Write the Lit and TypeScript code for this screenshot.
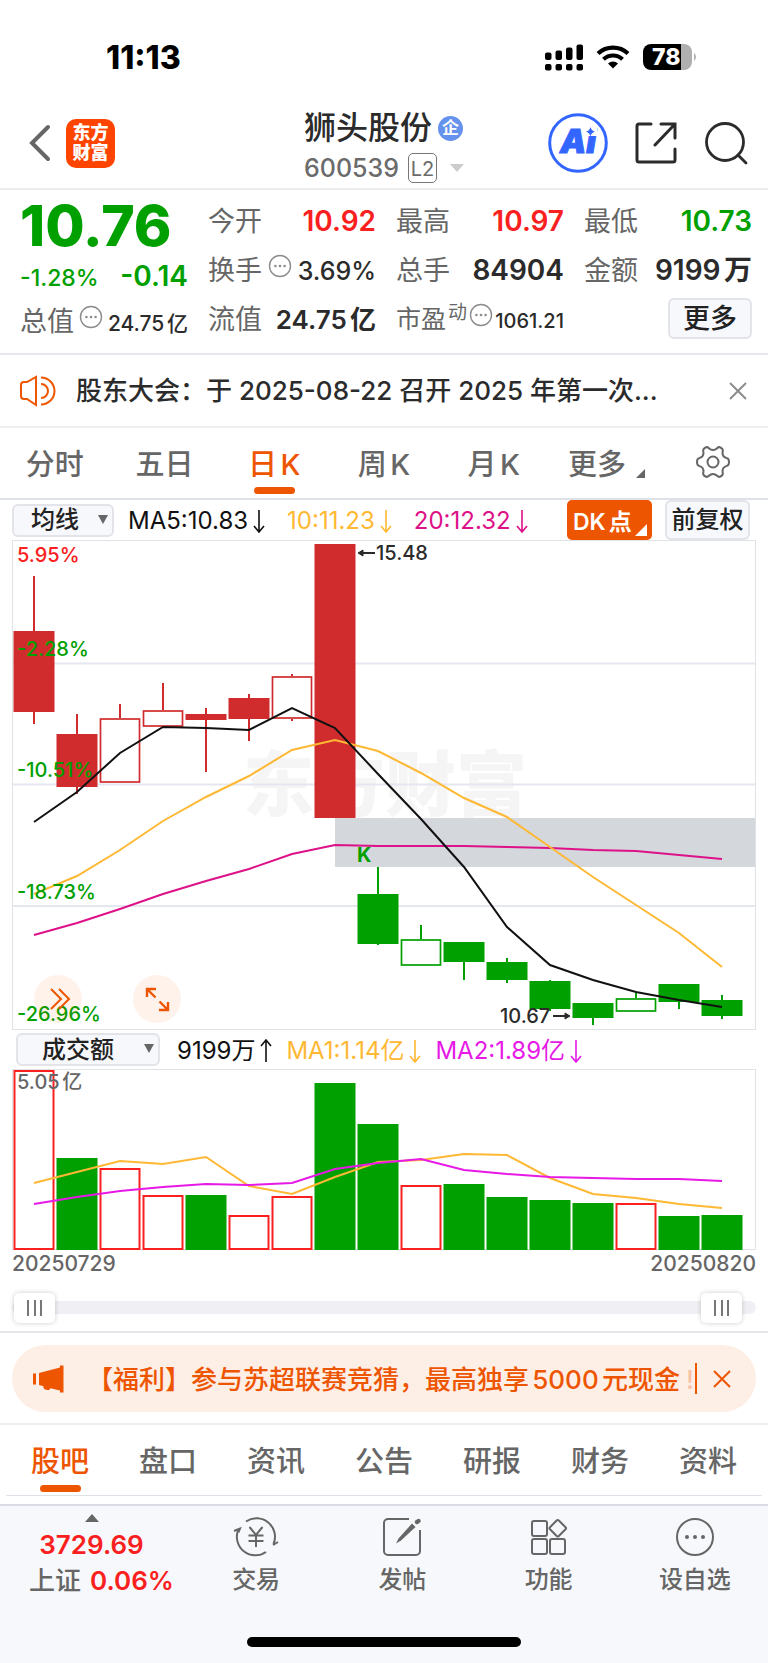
import { LitElement, html, svg, css } from "lit";
import { customElement } from "lit/decorators.js";
import { classMap } from "lit/directives/class-map.js";

type Candle = { open: number; close: number; high: number; low: number; up: boolean; hollow: boolean };

const STEP = 43;
const FIRST = 34;
const cx = (i: number) => FIRST + i * STEP;

const candle = (open: number, close: number, high: number, low: number, up: boolean, hollow = false): Candle => ({
  open, close, high, low, up, hollow,
});

const CANDLES: Candle[] = [
  candle(631, 712, 576, 724, true),
  candle(734, 787, 714, 794, true),
  candle(718, 783, 704, 783, true, true),
  candle(710, 727, 683, 727, true, true),
  candle(714, 720, 708, 772, true),
  candle(698, 719, 694, 741, true),
  candle(676, 719, 674, 721, true, true),
  candle(544, 818, 544, 818, true),
  candle(894, 944, 867, 945, false),
  candle(939, 966, 925, 966, false, true),
  candle(942, 962, 942, 980, false),
  candle(962, 980, 958, 983, false),
  candle(981, 1009, 980, 1011, false),
  candle(1003, 1018, 1003, 1025, false),
  candle(998, 1012, 993, 1012, false, true),
  candle(984, 1002, 984, 1009, false),
  candle(1000, 1016, 995, 1019, false),
];

const MA5 = [822, 792, 753, 727, 728, 730, 708, 728, 774, 819, 867, 927, 965, 980, 992, 1000, 1007];
const MA10 = [894, 876, 850, 821, 797, 776, 750, 740, 751, 773, 798, 817, 847, 877, 905, 933, 967];
const MA20 = [935, 923, 909, 894, 881, 869, 854, 845, 846, 846, 846, 847, 848, 850, 851, 855, 859];

const VOLUMES: [number, boolean][] = [
  [1070, true], [1158, false], [1168, true], [1195, true], [1195, false], [1215, true], [1196, true],
  [1083, false], [1124, false], [1185, true], [1184, false], [1197, false], [1200, false], [1203, false],
  [1203, true], [1216, false], [1215, false],
];
const VMA1 = [1183, 1172, 1161, 1164, 1157, 1186, 1194, 1177, 1162, 1160, 1154, 1155, 1178, 1194, 1198, 1204, 1208];
const VMA2 = [1204, 1197, 1191, 1187, 1184, 1185, 1183, 1169, 1163, 1159, 1170, 1174, 1177, 1178, 1179, 1179, 1181];

const points = (ys: number[]) => ys.map((y, i) => `${cx(i)},${y}`).join(" ");

const moreDots = html`<svg class="dots" viewBox="0 0 24 24" aria-hidden="true">
  <circle cx="12" cy="12" r="10.5" fill="none" stroke="#8c8c8c" stroke-width="1.4" />
  <circle cx="7.4" cy="12" r="1.3" /><circle cx="12" cy="12" r="1.3" /><circle cx="16.6" cy="12" r="1.3" />
</svg>`;

const arrow = (up = false) => html`<svg class="arrow" viewBox="0 0 12 24" aria-hidden="true">
  <path d=${up ? "M6 23V2M1 7l5-6 5 6" : "M6 1v21M1 17l5 6 5-6"} fill="none" stroke="currentColor" stroke-width="1.6" />
</svg>`;

@customElement("app-root")
export class AppRoot extends LitElement {
  static styles = css`
    :host {
      display: block;
      background: #fff;
      color: #2b2b2b;
      font-family: Inter, "Noto Sans CJK SC", sans-serif;
      font-size: 24px;
      text-autospace: normal;
    }
    * { box-sizing: border-box; }
    button, select {
      font: inherit;
      color: inherit;
      border: 0;
      background: none;
      padding: 0;
      margin: 0;
    }
    svg { display: block; flex: none; }

    .status {
      display: flex;
      align-items: center;
      justify-content: space-between;
      height: 98px;
      padding: 16px 71px 0 106px;
      color: #000;
    }
    .clock { font-size: 32px; font-weight: 800; }
    .signals { display: flex; align-items: center; gap: 13px; }

    .head {
      display: grid;
      grid-template-columns: 1fr auto 1fr;
      align-items: center;
      height: 92px;
      padding: 0 20px;
      border-bottom: 2px solid #ececec;
    }
    .left, .right { display: flex; align-items: center; }
    .left { gap: 14px; padding-left: 8px; }
    .right { justify-content: flex-end; gap: 27px; }
    .logo {
      display: grid;
      place-content: center;
      width: 49px;
      height: 49px;
      border-radius: 10px;
      background: #ff4400;
      color: #fff;
      font-size: 18px;
      line-height: 20px;
      font-weight: 900;
      text-decoration: none;
    }
    .stock { padding-top: 10px; }
    .title { display: flex; align-items: center; gap: 6px; height: 40px; font-size: 32px; line-height: 40px; margin: 0; font-weight: 500; }
    .corp {
      width: 25px;
      height: 25px;
      border-radius: 50%;
      background: #6592ec;
      color: #fff;
      font-size: 17px;
      line-height: 24px;
      font-weight: 700;
      text-align: center;
    }
    .code { display: flex; align-items: center; gap: 9px; color: #6b6b6b; font-size: 25px; line-height: 32px; height: 40px; font-weight: 500; }
    .level { border: 1px solid #777; border-radius: 5px; width: 29px; height: 30px; font-size: 20px; line-height: 30px; text-align: center; font-weight: 400; }
    .code svg { margin-left: 4px; }

    .quote {
      display: grid;
      grid-template-columns: repeat(4, 1fr);
      column-gap: 20px;
      height: 165px;
      padding: 7px 16px 0 20px;
      border-bottom: 2px solid #e6e8ee;
    }
    .col { display: flex; flex-direction: column; }
    .pair { display: flex; justify-content: space-between; align-items: baseline; height: 49px; line-height: 49px; white-space: nowrap; }
    .label { color: #666; font-size: 27px; }
    .label.mid { font-size: 25px; }
    .num { font-size: 28px; font-weight: 600; }
    .num.amount { font-size: 26px; }
    .num.mid { font-size: 25px; font-weight: 500; }
    .num.small { font-size: 21px; font-weight: 500; }
    .num.tiny { font-size: 20px; font-weight: 500; }
    .red { color: #fa2020; }
    .green { color: #00a000; }
    .price { font-size: 57px; font-weight: 800; line-height: 58px; height: 58px; }
    .change { height: 46px; line-height: 42px; }
    .change .pct { font-size: 23px; font-weight: 500; }
    .cap { height: 42px; line-height: 42px; }
    .sup { align-self: flex-start; color: #666; font-size: 19px; line-height: 36px; }
    .dots { width: 24px; height: 24px; align-self: flex-start; fill: #8c8c8c; margin-top: 8px; }
    .cap .dots { margin-top: 4px; }
    .soft {
      border: 2px solid #e2e4ea;
      border-radius: 6px;
      background: #f7f8fb;
      color: #222;
      font-weight: 500;
    }
    .more { align-self: flex-end; width: 84px; height: 41px; margin-top: 3px; font-size: 27px; line-height: 36px; }

    .notice {
      display: flex;
      align-items: center;
      height: 73px;
      padding: 0 20px;
      gap: 20px;
      border-bottom: 2px solid #eee;
    }
    .notice p { flex: 1; margin: 0; font-size: 26px; font-weight: 500; white-space: nowrap; overflow: hidden; text-overflow: ellipsis; padding-bottom: 4px; }

    .tabs { display: grid; grid-template-columns: repeat(7, 1fr); height: 72px; border-bottom: 2px solid #dfe1e8; }
    .tab {
      position: relative;
      display: flex;
      align-items: center;
      justify-content: center;
      padding-bottom: 3px;
      color: #666;
      font-size: 29px;
      font-weight: 500;
      white-space: nowrap;
    }
    .tab.on { color: #ee5500; }
    .tab.on::after {
      content: "";
      position: absolute;
      bottom: 4px;
      width: 41px;
      height: 7px;
      border-radius: 4px;
      background: #ee5500;
    }
    .tab.drop { padding-left: 6px; }
    .corner { align-self: flex-end; margin: 0 0 17px 10px; }

    .legend { display: flex; align-items: center; height: 40px; padding: 0 18px 0 12px; white-space: nowrap; }
    .legend.lower { height: 39px; padding-left: 16px; text-autospace: no-autospace; }
    .pick { position: relative; }
    .pick select { appearance: none; width: 102px; height: 33px; padding-left: 17px; font-size: 24px; line-height: 28px; }
    .lower .pick select { width: 144px; padding-left: 24px; }
    .pick svg { position: absolute; right: 6px; top: 11px; pointer-events: none; }
    .ma { display: flex; align-items: center; gap: 5px; margin-left: 22px; font-size: 24px; line-height: 30px; padding-top: 2px; }
    .ma.first { margin-left: 14px; }
    .lower .ma { margin-left: 14px; }
    .lower .ma.first { margin-left: 17px; }
    .arrow { width: 12px; height: 24px; }
    .black { color: #111; }
    .amber { color: #ffb833; }
    .pink { color: #dd1188; }
    .violet { color: #e619e6; }
    .dk, .fq { width: 85px; height: 40px; }
    .dk { position: relative; margin-left: auto; border-radius: 5px; background: #ee5500; color: #fff; font-weight: 600; font-size: 23px; text-align: left; padding-left: 6px; }
    .dk svg { position: absolute; right: 5px; bottom: 4px; }
    .fq { margin-left: 13px; font-size: 24px; line-height: 34px; }

    .chart { margin: 0 12px; position: relative; }
    .chart svg { width: 100%; height: auto; }
    .chart text { font-family: Inter, "Noto Sans CJK SC", sans-serif; font-size: 20px; font-weight: 500; }
    .chart .mark { font-size: 71px; font-weight: 900; fill: #f5f5f6; }
    .chart .point { font-weight: 700; }
    .chart .note { fill: #2b2b2b; }
    .chart .gray { fill: #666; }
    .tools { position: absolute; left: 22px; bottom: 7px; display: flex; gap: 51px; }
    .tool { display: grid; place-content: center; width: 48px; height: 48px; border-radius: 50%; background: rgba(238, 85, 0, 0.08); }
    .chart .tool svg { width: 28px; height: 28px; }

    .dates { display: flex; justify-content: space-between; padding: 0 12px; color: #666; font-size: 21px; font-weight: 500; line-height: 28px; }
    .zoom { display: grid; align-items: center; height: 47px; margin: 6px 12px 0; }
    .zoom > * { grid-area: 1 / 1; }
    .track { height: 13px; border-radius: 7px; background: #f0f0f4; }
    .zoom input { appearance: none; width: 100%; height: 30px; margin: 0; background: transparent; pointer-events: none; }
    .zoom input::-webkit-slider-thumb {
      appearance: none;
      pointer-events: auto;
      width: 41px;
      height: 30px;
      border-radius: 5px;
      background:
        linear-gradient(#777, #777) 13px 7px / 2px 16px no-repeat,
        linear-gradient(#777, #777) 20px 7px / 2px 16px no-repeat,
        linear-gradient(#777, #777) 26px 7px / 2px 16px no-repeat,
        #fff;
      box-shadow: 0 0 5px rgba(0, 0, 0, 0.2);
    }

    .promo { border-top: 2px solid #e4e6ea; border-bottom: 2px solid #eee; padding: 12px 12px 11px; }
    .pill { display: flex; align-items: center; height: 67px; padding: 0 25px 0 20px; border-radius: 34px; background: #fdeee6; color: #ee5500; }
    .pill p { flex: 1; margin: 0 0 0 22px; font-size: 26px; font-weight: 500; white-space: nowrap; padding-bottom: 2px; }
    .fade { color: rgba(238, 85, 0, 0.3); padding-left: 6px; }
    .bar { width: 2px; height: 31px; background: #ee5500; margin-right: 16px; }

    .sections { height: 71px; margin: 0 6px 8px; border-bottom-width: 1px; }
    .sections .tab.on::after { bottom: 3px; }

    .foot { background: #f7f8fb; border-top: 2px solid #dadce3; padding-bottom: 17px; }
    .dock { display: grid; grid-template-columns: 183px repeat(4, 1fr); height: 131px; }
    .dock button { display: flex; flex-direction: column; align-items: center; color: #666; font-size: 24px; line-height: 32px; font-weight: 500; }
    .dock .icon { margin-top: 11px; margin-bottom: 7px; }
    .dock .index { line-height: 36px; font-size: 26px; }
    .index svg { margin: 8px 0 5px; }
    .index .num { font-size: 26px; }
    .index .row { display: flex; gap: 9px; padding-left: 20px; }
    .home { width: 274px; height: 10px; border-radius: 5px; background: #000; margin: 0 auto; }
  `;

  private tab(name: string, on = false) {
    return html`<button class=${classMap({ tab: true, on })} role="tab" aria-selected=${on}>${name}</button>`;
  }

  private candles() {
    return CANDLES.map((c, i) => {
      const x = cx(i);
      const color = c.up ? "#d02c2e" : "#00a000";
      const inset = c.hollow ? 1 : 0;
      return svg`
        <path d="M${x} ${c.high}V${c.open}M${x} ${c.close}V${c.low}" stroke=${color} stroke-width="2" />
        <rect x=${x - 20.5 + inset} y=${c.open + inset} width=${41 - inset * 2} height=${c.close - c.open - inset * 2}
          fill=${c.hollow ? "#fff" : color} stroke=${c.hollow ? color : "none"} stroke-width="1.7" />`;
    });
  }

  private priceChart() {
    return html`<svg viewBox="12 540 744 490" role="img" aria-label="日K">
      <text class="mark" x="243" y="810">东方财富</text>
      <path d="M12 663.5H756M12 784.5H756M12 906H756" stroke="#e4e7ee" stroke-width="2" />
      <rect x="12.5" y="540.5" width="743" height="489" fill="none" stroke="#dfe2e7" />
      <rect x="335" y="818" width="420" height="49" fill="#d4d7dc" />
      ${this.candles()}
      <g fill="none" stroke-width="2">
        <polyline points=${points(MA20)} stroke="#dd1188" />
        <polyline points=${points(MA10)} stroke="#ffb833" />
        <polyline points=${points(MA5)} stroke="#111" />
      </g>
      <text x="17" y="562" fill="#fa2020">5.95%</text>
      <g fill="#00a000">
        <text x="17" y="656">-2.28%</text>
        <text x="17" y="777">-10.51%</text>
        <text x="17" y="899">-18.73%</text>
        <text x="17" y="1021">-26.96%</text>
        <text class="point" x="357" y="862">K</text>
      </g>
      <g stroke="#2b2b2b" stroke-width="2" fill="#2b2b2b">
        <path d="M375 553H360M553 1016H567" />
        <path d="M363 550l-5 3 5 3zM565 1013l5 3-5 3z" stroke-width="1" />
      </g>
      <text class="note" x="376" y="560">15.48</text>
      <text class="note" x="500" y="1023">10.67</text>
    </svg>`;
  }

  private volumeChart() {
    return html`<svg viewBox="12 1069 744 181" role="img" aria-label="成交额">
      <rect x="12.5" y="1069.5" width="743" height="180" fill="none" stroke="#dfe2e7" />
      ${VOLUMES.map(([top, hollow], i) => hollow
        ? svg`<rect x=${cx(i) - 19.5} y=${top + 1} width="39" height=${1248 - top} fill="#fff" stroke="#fa2020" stroke-width="2" />`
        : svg`<rect x=${cx(i) - 20.5} y=${top} width="41" height=${1250 - top} fill="#00a000" />`)}
      <g fill="none" stroke-width="2">
        <polyline points=${points(VMA1)} stroke="#ffb833" />
        <polyline points=${points(VMA2)} stroke="#e619e6" />
      </g>
      <text class="gray" x="17" y="1089">5.05亿</text>
    </svg>`;
  }

  render() {
    return html`
      <div class="status">
        <span class="clock">11:13</span>
        <div class="signals">
          <svg width="38" height="27" viewBox="0 0 38 27">
            <rect x="0" y="8.5" width="6.5" height="7.5" rx="2" /><rect x="10.5" y="6.5" width="6.5" height="9.5" rx="2" />
            <rect x="21" y="3.5" width="6.5" height="12.5" rx="2" /><rect x="31.5" y="0.5" width="6.5" height="15.5" rx="2" />
            <rect x="0" y="20" width="6.5" height="6.5" rx="2" /><rect x="10.5" y="20" width="6.5" height="6.5" rx="2" />
            <rect x="21" y="20" width="6.5" height="6.5" rx="2" /><rect x="31.5" y="20" width="6.5" height="6.5" rx="2" />
          </svg>
          <svg width="34" height="26" viewBox="0 0 34 26">
            <path d="M2 9.5a22 22 0 0 1 30 0M7.5 15.2a14 14 0 0 1 19 0" fill="none" stroke="#000" stroke-width="4.2" />
            <path d="M17 24.5l-5-5a7.4 7.4 0 0 1 10 0z" />
          </svg>
          <svg width="54" height="26" viewBox="0 0 54 26">
            <path d="M38 0H41a8 8 0 0 1 8 8v10a8 8 0 0 1-8 8h-3z" fill="#b0b0b0" />
            <path d="M8 0H38V26H8a8 8 0 0 1-8-8V8a8 8 0 0 1 8-8z" />
            <path d="M51 9a5 5 0 0 1 0 8z" fill="#b0b0b0" />
            <text x="9" y="21" font-size="23" font-weight="800" fill="#fff">78</text>
          </svg>
        </div>
      </div>

      <header class="head">
        <div class="left">
          <button aria-label="返回">
            <svg width="24" height="38" viewBox="0 0 24 38"><path d="M20 3L4 19l16 16" fill="none" stroke="#666" stroke-width="4" stroke-linecap="round" /></svg>
          </button>
          <a class="logo" href="#"><span>东方</span><span>财富</span></a>
        </div>
        <div class="stock">
          <h1 class="title">狮头股份<span class="corp">企</span></h1>
          <div class="code">600539<span class="level">L2</span>
            <svg width="14" height="8" viewBox="0 0 14 8"><path d="M0 0h14L7 8z" fill="#ccc" /></svg>
          </div>
        </div>
        <div class="right">
          <button aria-label="Ai">
            <svg width="60" height="60" viewBox="0 0 60 60">
              <circle cx="30" cy="30" r="28.3" fill="#fff" stroke="#3366ff" stroke-width="3" />
              <text x="12" y="40" font-size="33" font-weight="900" font-style="italic" fill="#3366ff" stroke="#3366ff" stroke-width="1">Ai</text>
              <path d="M35 11h14v12H35z" fill="#fff" />
              <path d="M42.5 14c1 3 1.7 3.7 4.5 4.7-2.8 1-3.5 1.7-4.5 4.7-1-3-1.7-3.7-4.5-4.7 2.8-1 3.5-1.7 4.5-4.7z" fill="#3366ff" />
            </svg>
          </button>
          <button aria-label="分享">
            <svg width="42" height="42" viewBox="0 0 42 42" fill="none" stroke="#2b2b2b" stroke-width="3" stroke-linecap="round">
              <path d="M16 2H4a2 2 0 0 0-2 2V38a2 2 0 0 0 2 2H38a2 2 0 0 0 2-2V27M26 2H40V16M40 2L20 23" />
            </svg>
          </button>
          <button aria-label="搜索">
            <svg width="44" height="44" viewBox="0 0 44 44" fill="none" stroke="#2b2b2b" stroke-width="2.8" stroke-linecap="round">
              <circle cx="21" cy="21" r="18.5" /><path d="M34 34l8 8" />
            </svg>
          </button>
        </div>
      </header>

      <section class="quote">
        <div class="col">
          <div class="price green">10.76</div>
          <div class="pair change green"><span class="pct">-1.28%</span><span class="num">-0.14</span></div>
          <div class="pair cap"><span class="label">总值</span>${moreDots}<span class="num small">24.75亿</span></div>
        </div>
        <div class="col">
          <div class="pair"><span class="label">今开</span><span class="num red">10.92</span></div>
          <div class="pair"><span class="label">换手</span>${moreDots}<span class="num mid">3.69%</span></div>
          <div class="pair"><span class="label">流值</span><span class="num amount">24.75亿</span></div>
        </div>
        <div class="col">
          <div class="pair"><span class="label">最高</span><span class="num red">10.97</span></div>
          <div class="pair"><span class="label">总手</span><span class="num">84904</span></div>
          <div class="pair"><span class="label mid">市盈</span><span class="sup">动</span>${moreDots}<span class="num tiny">1061.21</span></div>
        </div>
        <div class="col">
          <div class="pair"><span class="label">最低</span><span class="num green">10.73</span></div>
          <div class="pair"><span class="label">金额</span><span class="num">9199万</span></div>
          <button class="soft more">更多</button>
        </div>
      </section>

      <section class="notice">
        <svg width="36" height="32" viewBox="0 0 36 32" fill="none" stroke="#ee5500" stroke-width="2">
          <path d="M16 2v28L7 24H4a3 3 0 0 1-3-3V10a3 3 0 0 1 3-3h3z" />
          <path d="M21 2.5a13.5 13.5 0 0 1 0 27M21 9a7 7 0 0 1 0 14" />
        </svg>
        <p>股东大会：于 2025-08-22 召开 2025 年第一次...</p>
        <button aria-label="关闭">
          <svg width="20" height="20" viewBox="0 0 20 20"><path d="M2 2l16 16M18 2L2 18" stroke="#8c8c8c" stroke-width="2" /></svg>
        </button>
      </section>

      <nav class="tabs" role="tablist">
        ${this.tab("分时")}${this.tab("五日")}${this.tab("日K", true)}${this.tab("周K")}${this.tab("月K")}
        <button class="tab drop" role="tab">更多<svg class="corner" width="9" height="9" viewBox="0 0 9 9"><path d="M9 0v9H0z" fill="#666" /></svg></button>
        <button class="tab" aria-label="设置">
          <svg width="34" height="32" viewBox="0 0 34 32" fill="none" stroke="#666" stroke-width="2">
            <path d="M9.5 1.5c1.3-.8 2.3-.4 3.4.7 2.4 2.3 5.8 2.3 8.2 0 1.1-1.1 2.1-1.5 3.4-.7 2 1 2.7 1.8 2.3 3.5-.8 3.4.9 6.2 4.1 7.1 1.6.4 2.1 1.2 2.1 3.9s-.5 3.5-2.1 3.9c-3.2.9-4.9 3.7-4.1 7.1.4 1.7-.3 2.5-2.3 3.5-1.3.8-2.3.4-3.4-.7-2.4-2.3-5.8-2.3-8.2 0-1.1 1.1-2.1 1.5-3.4.7-2-1-2.7-1.8-2.3-3.5.8-3.4-.9-6.2-4.1-7.1C1.5 19.5 1 18.7 1 16s.5-3.5 2.1-3.9c3.2-.9 4.900-3.7 4.100-7.100-.4-1.700.3-2.500 2.300-3.500z" />
            <circle cx="17" cy="16" r="5.5" />
          </svg>
        </button>
      </nav>

      <div class="legend">
        <div class="pick">
          <select class="soft" aria-label="主图指标"><option>均线</option></select>
          <svg width="10" height="9" viewBox="0 0 10 9"><path d="M0 0h10L5 9z" fill="#666" /></svg>
        </div>
        <span class="ma first black">MA5:10.83${arrow()}</span>
        <span class="ma amber">10:11.23${arrow()}</span>
        <span class="ma pink">20:12.32${arrow()}</span>
        <button class="dk">DK点<svg width="12" height="12" viewBox="0 0 12 12"><path d="M12 0v12H0z" fill="#fff" /></svg></button>
        <button class="soft fq">前复权</button>
      </div>

      <div class="chart">
        ${this.priceChart()}
        <div class="tools">
          <button class="tool" aria-label="展开">
            <svg viewBox="0 0 28 28" fill="none" stroke="#ee5500" stroke-width="2"><path d="M7 4l10 10L7 24M15 4l10 10-10 10" /></svg>
          </button>
          <button class="tool" aria-label="全屏">
            <svg viewBox="0 0 28 28" fill="none" stroke="#ee5500" stroke-width="2.4"><path d="M4 12V4h9M4 4l8.500 8.500M25 17v8h-9M25 25l-8.500-8.500" /></svg>
          </button>
        </div>
      </div>

      <div class="legend lower">
        <div class="pick">
          <select class="soft" aria-label="副图指标"><option>成交额</option></select>
          <svg width="10" height="9" viewBox="0 0 10 9"><path d="M0 0h10L5 9z" fill="#666" /></svg>
        </div>
        <span class="ma first black">9199万${arrow(true)}</span>
        <span class="ma amber">MA1:1.14亿${arrow()}</span>
        <span class="ma violet">MA2:1.89亿${arrow()}</span>
      </div>
      <div class="chart">${this.volumeChart()}</div>
      <div class="dates"><span>20250729</span><span>20250820</span></div>

      <div class="zoom">
        <div class="track"></div>
        <input type="range" min="0" max="1000" value="3" aria-label="开始日期" />
        <input type="range" min="0" max="1000" value="980" aria-label="结束日期" />
      </div>

      <section class="promo">
        <div class="pill">
          <svg width="33" height="28" viewBox="0 0 33 28" fill="#ee5500">
            <path d="M1 8.5h3v11H1zM7 8L28 2.5V.5h3.500v27H28v-2l-9.500-2.300c-.5 1.600-1.800 2-3.500 1.700-2-.4-4-1-3.500-3.600L7 20z" />
          </svg>
          <p>【福利】参与苏超联赛竞猜，最高独享5000元现金<span class="fade">!</span></p>
          <span class="bar"></span>
          <button aria-label="关闭">
            <svg width="18" height="18" viewBox="0 0 18 18"><path d="M1 1l16 16M17 1L1 17" stroke="#ee5500" stroke-width="2" /></svg>
          </button>
        </div>
      </section>

      <nav class="tabs sections" role="tablist">
        ${["股吧", "盘口", "资讯", "公告", "研报", "财务", "资料"].map((name, i) => this.tab(name, i === 0))}
      </nav>

      <footer class="foot">
        <nav class="dock">
          <button class="index">
            <svg width="14" height="8" viewBox="0 0 14 8"><path d="M0 8h14L7 0z" fill="#666" /></svg>
            <span class="num red">3729.69</span>
            <span class="row">上证<span class="num red">0.06%</span></span>
          </button>
          <button>
            <svg class="icon" width="46" height="40" viewBox="0 0 46 40" fill="none" stroke="#666" stroke-width="2">
              <path d="M13 4.5A18.5 18.5 0 0 1 40.500 27M40.500 28l1-2M40 28l5-3M33 35A18.500 18.500 0 0 1 5 13.500M1 14l6-2.500-1.500 4" />
              <path d="M16.500 10l6.500 8 6.500-8M15.500 18.500h15M15.500 24h15M23 18v12" />
            </svg>交易
          </button>
          <button>
            <svg class="icon" width="40" height="40" viewBox="0 0 40 40" fill="none" stroke="#666" stroke-width="2">
              <path d="M27 2H6a4 4 0 0 0-4 4v28a4 4 0 0 0 4 4h28a4 4 0 0 0 4-4V13" />
              <path d="M35 5L36.500 4" stroke-width="4.500" stroke-linecap="round" />
              <path d="M30 6.500l3.500 3.500L19 23.500l-5 3 2.500-5z" fill="#666" stroke="none" />
            </svg>发帖
          </button>
          <button>
            <svg class="icon" width="40" height="40" viewBox="0 0 40 40" fill="none" stroke="#666" stroke-width="2">
              <rect x="3" y="4" width="15" height="15" rx="2" /><rect x="3" y="22" width="15" height="15" rx="2" />
              <rect x="21" y="22" width="15" height="15" rx="2" /><rect x="22.500" y="5" width="12.500" height="12.500" rx="1.500" transform="rotate(45 28.750 11.250)" />
            </svg>功能
          </button>
          <button>
            <svg class="icon" width="40" height="40" viewBox="0 0 40 40">
              <circle cx="20" cy="20" r="18" fill="none" stroke="#666" stroke-width="2" />
              <g fill="#666"><circle cx="12" cy="20" r="2" /><circle cx="20" cy="20" r="2" /><circle cx="28" cy="20" r="2" /></g>
            </svg>设自选
          </button>
        </nav>
        <div class="home"></div>
      </footer>
    `;
  }
}
